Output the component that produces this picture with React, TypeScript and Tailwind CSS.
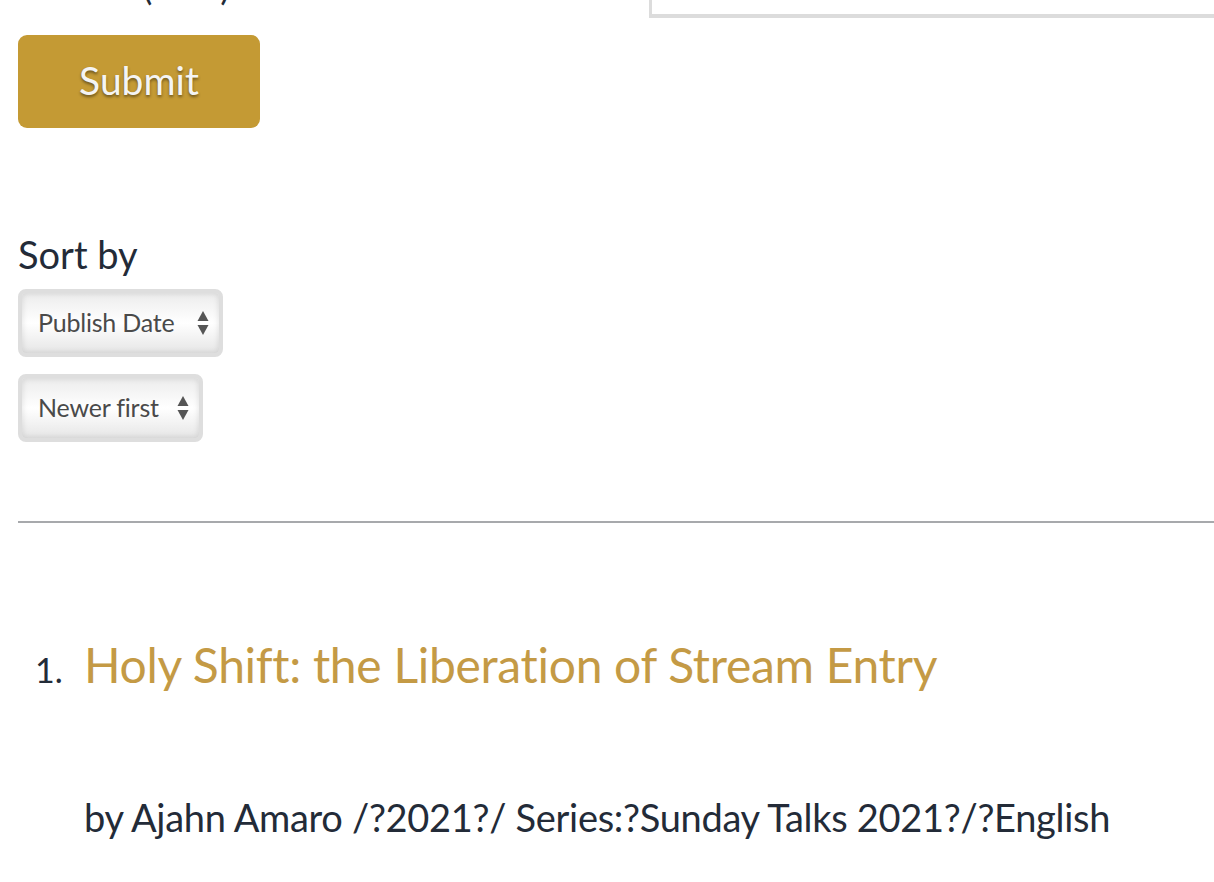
const SortArrows = () => (
  <svg width="12" height="26" viewBox="0 0 12 26" className="shrink-0">
    <path d="M6 1 L11.5 11 L0.5 11 Z" fill="#555" />
    <path d="M6 25 L11.5 15 L0.5 15 Z" fill="#555" />
  </svg>
);

const FakeSelect = ({ label, width }: { label: string; width: string }) => (
  <div
    className={`${width} h-[68px] rounded-[8px] border-4 border-[#dedede] bg-gradient-to-b from-[#ececec] via-white to-[#e6e6e6] shadow-[inset_0_0_6px_rgba(0,0,0,0.12)] flex items-center justify-between pl-[16px] pr-[10px]`}
  >
    <span className="text-[25px] text-[#4a4a4a] tracking-[-0.2px]">{label}</span>
    <SortArrows />
  </div>
);

export default function App() {
  return (
    <div
      className="w-[1214px] h-[882px] overflow-hidden bg-white pl-[18px] text-[#232b38]"
      style={{ fontFamily: "Lato, 'Noto Sans', sans-serif" }}
    >
      <div className="flex -mt-[40px] h-[58px]">
        <div className="mt-[8px] ml-[10px] text-[36px] leading-[36px]">Before (date)</div>
        <div className="ml-auto w-[565px] h-[58px] border-l-[3px] border-b-4 border-[#dcdcdc]" />
      </div>

      <button
        type="button"
        className="mt-[17px] w-[242px] h-[93px] rounded-[9px] bg-[#c49a34] text-[39px] leading-[44px] pb-[4px] text-[#f4f4f4] [text-shadow:0_2px_3px_rgba(0,0,0,0.45)]"
      >
        Submit
      </button>

      <div className="mt-[104px] text-[38px] leading-[44px]">Sort by</div>

      <div className="mt-[13px] flex flex-col gap-[17px]">
        <FakeSelect label="Publish Date" width="w-[205px]" />
        <FakeSelect label="Newer first" width="w-[185px]" />
      </div>

      <hr className="mt-[79px] border-0 h-[2px] bg-[#a7a9ac]" />

      <ol className="mt-[112px]">
        <li className="flex items-baseline">
          <span className="w-[66px] pl-[17px] text-[34px]">1.</span>
          <div className="flex flex-col">
            <a className="text-[48px] leading-[60px] text-[#c49a45] tracking-[-0.3px]">
              Holy Shift: the Liberation of Stream Entry
            </a>
            <p className="mt-[99px] text-[38px] leading-[46px] tracking-[-0.3px]">
              by Ajahn Amaro /?2021?/ Series:?Sunday Talks 2021?/?English
            </p>
          </div>
        </li>
      </ol>
    </div>
  );
}
